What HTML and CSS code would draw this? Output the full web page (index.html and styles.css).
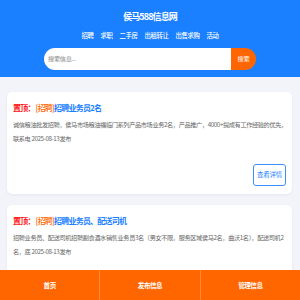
FILE: index.html
```html
<!DOCTYPE html>
<html lang="zh-CN">
<head>
<meta charset="utf-8">
<title>侯马588信息网</title>
<link rel="stylesheet" href="styles.css">
</head>
<body>
<header class="header">
  <h1 class="site-title">侯马588信息网</h1>
  <nav class="nav">
    <a class="nav-item">招聘</a>
    <a class="nav-item">求职</a>
    <a class="nav-item">二手房</a>
    <a class="nav-item">出租转让</a>
    <a class="nav-item">出售求购</a>
    <a class="nav-item">活动</a>
  </nav>
  <form class="search">
    <div class="search-input">搜索信息...</div>
    <div class="search-btn">搜索</div>
  </form>
</header>
<main class="list">
  <article class="card">
    <h2 class="card-title"><span class="top">置顶：</span><span class="cat">[招聘]</span><span class="name">招聘业务员2名</span></h2>
    <p class="card-text">诚信粮油批发招聘，侯马市场粮油福临门系列产品市场业务2名，产品推广，4000+提成有工作经验的优先，<br>联系电 2025-08-13发布</p>
    <div class="card-foot"><a class="detail-btn">查看详情</a></div>
  </article>
  <article class="card card-cut">
    <h2 class="card-title"><span class="top">置顶：</span><span class="cat">[招聘]</span><span class="name">招聘业务员、配送司机</span></h2>
    <p class="card-text">招聘业务员、配送司机招聘副食酒水销售业务员3名（男女不限，服务区域侯马2名，曲沃1名），配送司机2<br>名，底 2025-08-13发布</p>
  </article>
</main>
<footer class="tabbar">
  <a class="tab">首页</a>
  <a class="tab">发布信息</a>
  <a class="tab">管理信息</a>
</footer>
</body>
</html>
```
FILE: styles.css
```css
* { box-sizing: border-box; }
html, body { height: 100%; }
body {
  margin: 0;
  background: #f3f4f9;
  font-family: "Noto Sans CJK SC", "Noto Sans", sans-serif;
  color: #666;
  display: flex;
  flex-direction: column;
  overflow: hidden;
}
.header {
  flex-shrink: 0;
  background: #1a80ff;
  padding: 8px 0 7px;
  text-align: center;
}
.site-title {
  margin: 0;
  font-size: 9px;
  line-height: 18px;
  font-weight: 700;
  letter-spacing: -0.9px;
  color: #fff;
}
.nav {
  margin-top: 4px;
  display: flex;
  justify-content: center;
  gap: 7px;
  line-height: 12px;
}
.nav-item {
  font-size: 6.4px;
  letter-spacing: -0.4px;
  color: #fff;
  font-weight: 500;
}
.search {
  margin: 6px auto 0;
  width: 212px;
  height: 22px;
  display: flex;
}
.search-input {
  flex: 1;
  background: #fff;
  border-radius: 11px 0 0 11px;
  padding-left: 4px;
  font-size: 6.2px;
  letter-spacing: -0.3px;
  line-height: 22px;
  color: #888;
  text-align: left;
}
.search-btn {
  width: 25px;
  background: #ff6600;
  border-radius: 0 11px 11px 0;
  color: #fff;
  font-size: 6.2px;
  letter-spacing: -0.3px;
  line-height: 22px;
  text-align: center;
}
.list {
  flex: 1;
  min-height: 0;
  overflow: hidden;
  padding: 15px 8px 0 7px;
  display: flex;
  flex-direction: column;
  gap: 11px;
}
.card {
  flex-shrink: 0;
  background: #fff;
  border-radius: 5px;
  box-shadow: 0 1px 3px rgba(0, 0, 0, 0.06);
  padding: 8px 6px 8px 6px;
}
.card-cut {
  flex: 1;
  border-radius: 5px 5px 0 0;
}
.card-title {
  margin: 0;
  font-size: 8px;
  line-height: 16px;
  font-weight: 700;
  letter-spacing: -0.8px;
}
.top { color: #ff1a1a; margin-right: 1px; }
.cat { color: #ff6600; font-weight: 500; }
.name { color: #1a80ff; }
.card-text {
  margin: 2px 0 0;
  font-size: 6.2px;
  line-height: 14px;
  letter-spacing: -0.38px;
  color: #666;
  white-space: nowrap;
}
.card-foot {
  margin-top: 18px;
  display: flex;
  justify-content: flex-end;
}
.detail-btn {
  width: 33px;
  height: 22px;
  border: 1px solid #3a8fff;
  border-radius: 3px;
  color: #1a80ff;
  font-size: 6.4px;
  letter-spacing: -0.2px;
  line-height: 20px;
  text-align: center;
}
.tabbar {
  flex-shrink: 0;
  height: 30px;
  background: #ff6600;
  display: flex;
}
.tab {
  flex: 1;
  color: #fff;
  font-size: 6.6px;
  font-weight: 700;
  letter-spacing: -0.5px;
  line-height: 30px;
  text-align: center;
}
.tab + .tab { border-left: 1px solid #ff8a40; }
```
